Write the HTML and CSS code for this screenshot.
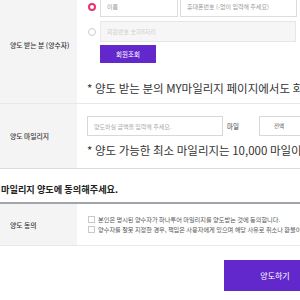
FILE: index.html
```html
<!DOCTYPE html>
<html>
<head>
    <meta charset="utf-8">
    <link rel="stylesheet" href="styles.css">
</head>
<body>
<div class="page">
    <div class="row receiver">
        <div class="th">양도 받는 분 (양수자)</div>
        <div class="td">
            <div class="line">
                <span class="radio on"></span>
                <input class="field name" type="text" placeholder="이름">
                <input class="field phone" type="text" placeholder="휴대폰번호 (-없이 입력해 주세요)">
            </div>
            <div class="line">
                <span class="radio"></span>
                <input class="field member" type="text" placeholder="회원번호 숫자8자리" disabled>
            </div>
            <button class="btn-search">회원조회</button>
            <p class="note">* 양도 받는 분의 MY마일리지 페이지에서도 회원번호를 확인하실 수 있습니다.</p>
        </div>
    </div>
    <div class="row amount">
        <div class="th">양도 마일리지</div>
        <div class="td">
            <div class="line">
                <input class="field mileage" type="text" placeholder="양도하실 금액을 입력해 주세요.">
                <span class="unit">마일</span>
                <div class="select">전액</div>
            </div>
            <p class="note">* 양도 가능한 최소 마일리지는 10,000 마일이며 1,000 마일 단위로 양도 가능합니다.</p>
        </div>
    </div>

    <h3 class="agree-title">마일리지 양도에 동의해주세요.</h3>

    <div class="row agree">
        <div class="th">양도 동의</div>
        <div class="td">
            <label class="check"><span class="box"></span>본인은 명시된 양수자가 하나투어 마일리지를 양도받는 것에 동의합니다.</label>
            <label class="check"><span class="box"></span>양수자를 잘못 지정한 경우, 책임은 사용자에게 있으며 해당 사유로 취소나 환불이 불가합니다.</label>
        </div>
    </div>

    <div class="actions">
        <button class="btn-submit">양도하기</button>
    </div>
</div>
</body>
</html>
```

FILE: styles.css
```css
html, body {
    margin: 0;
    overflow: hidden;
    background: #fff;
}

body {
    font-family: "Noto Sans CJK KR", "Noto Sans", sans-serif;
    color: #333;
}

.page {
    width: 420px;
    margin-top: -13px;
}

.row {
    display: flex;
    border-bottom: 1px solid #e8e8e8;
}

.th {
    width: 77px;
    flex: none;
    background: #f4f4f4;
    display: flex;
    align-items: center;
    padding-left: 10px;
    box-sizing: border-box;
    font-size: 6.8px;
    font-weight: 500;
    color: #333;
}

.td {
    flex: 1;
    padding-left: 10px;
}

.line {
    display: flex;
    align-items: center;
}

.receiver .td {
    padding-top: 9px;
    padding-bottom: 7px;
}

.receiver .line + .line {
    margin-top: 4px;
}

.radio {
    width: 8px;
    height: 8px;
    box-sizing: border-box;
    border-radius: 50%;
    border: 1px solid #cfcfcf;
    background: #fff;
    margin: 0 4px 0 1px;
}

.radio.on {
    border: 2.5px solid #e8336b;
}

.field {
    height: 21px;
    box-sizing: border-box;
    border: 1px solid #dcdcdc;
    background: #fff;
    padding: 0 6px;
    font-family: inherit;
    font-size: 6px;
    outline: none;
}

.field::placeholder {
    color: #999;
}

.field.name {
    width: 78px;
}

.field.phone {
    width: 117px;
    margin-left: 2px;
}

.field.member {
    width: 196px;
    background: #f6f6f6;
    border-color: #e6e6e6;
}

.field.member::placeholder {
    color: #d0d0d0;
}

.btn-search {
    display: block;
    margin: 3px 0 0 13px;
    width: 56px;
    height: 18px;
    border: 0;
    background: #6228cc;
    color: #fff;
    font-family: inherit;
    font-size: 6.5px;
}

.note {
    margin: 0;
    font-size: 11.5px;
    line-height: 16px;
    white-space: nowrap;
    color: #333;
}

.receiver .note {
    margin-top: 17px;
}

.amount .td {
    padding-top: 12px;
    padding-bottom: 10px;
}

.amount .note {
    margin-top: 6px;
}

.field.mileage {
    width: 136px;
    height: 20px;
    border-color: #d8d8d8;
}

.field.mileage::placeholder {
    color: #aaa;
}

.unit {
    font-size: 6.5px;
    margin: 0 20px 0 4px;
    color: #444;
}

.select {
    width: 70px;
    height: 20px;
    box-sizing: border-box;
    border: 1px solid #d8d8d8;
    font-size: 5.5px;
    line-height: 18px;
    padding-left: 14px;
    color: #555;
}

.amount {
    border-bottom-color: #dcdcdc;
}

.agree-title {
    margin: 0;
    padding: 14px 0 6px 1px;
    font-size: 9.2px;
    line-height: 13px;
    font-weight: 700;
    color: #222;
    border-bottom: 2px solid #a4a4ac;
}

.agree .td {
    padding: 10px 0 11px 11px;
}

.check {
    display: flex;
    align-items: center;
    height: 10px;
    font-size: 6.2px;
    color: #555;
    white-space: nowrap;
}

.box {
    width: 7px;
    height: 7px;
    box-sizing: border-box;
    border: 1px solid #c8c8c8;
    background: #fff;
    margin-right: 3px;
}

.actions {
    display: flex;
    padding: 14px 0 0 224px;
}

.btn-submit {
    width: 102px;
    height: 31px;
    border: 0;
    background: #6228cc;
    color: #fff;
    font-family: inherit;
    font-size: 8px;
}
```
